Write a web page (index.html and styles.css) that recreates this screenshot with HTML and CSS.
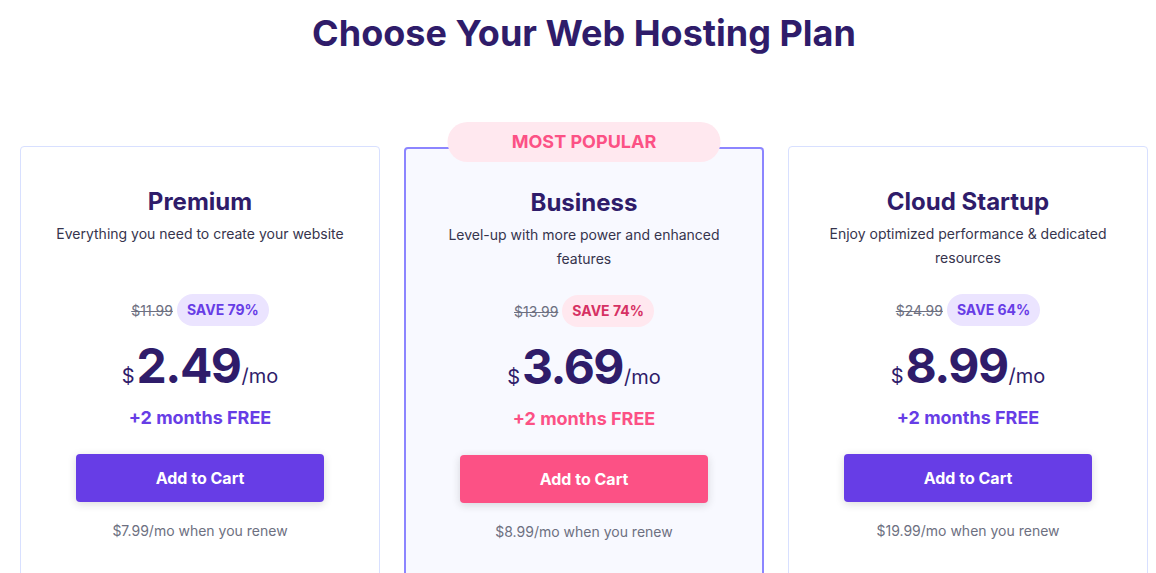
FILE: index.html
```html
<!DOCTYPE html>
<html lang="en">
<head>
    <meta charset="UTF-8">
    <meta name="viewport" content="width=device-width, initial-scale=1.0">
    <title>Choose Your Web Hosting Plan</title>
    <link rel="stylesheet" href="styles.css">
</head>
<body>
    <main class="pricing">
        <h1 class="pricing-title">Choose Your Web Hosting Plan</h1>

        <div class="plans">
            <div class="plan">
                <h2 class="plan-name">Premium</h2>
                <p class="plan-desc">Everything you need to create your website</p>
                <div class="plan-save">
                    <span class="old-price">$11.99</span>
                    <span class="save-pill">SAVE 79%</span>
                </div>
                <div class="plan-price">
                    <span class="currency">$</span><span class="amount">2.49</span><span class="period">/mo</span>
                </div>
                <p class="plan-bonus">+2 months FREE</p>
                <button type="button" class="cart-button">Add to Cart</button>
                <p class="plan-renew">$7.99/mo when you renew</p>
            </div>

            <div class="plan plan-popular">
                <span class="popular-badge">MOST POPULAR</span>
                <h2 class="plan-name">Business</h2>
                <p class="plan-desc">Level-up with more power and enhanced features</p>
                <div class="plan-save">
                    <span class="old-price">$13.99</span>
                    <span class="save-pill">SAVE 74%</span>
                </div>
                <div class="plan-price">
                    <span class="currency">$</span><span class="amount">3.69</span><span class="period">/mo</span>
                </div>
                <p class="plan-bonus">+2 months FREE</p>
                <button type="button" class="cart-button">Add to Cart</button>
                <p class="plan-renew">$8.99/mo when you renew</p>
            </div>

            <div class="plan">
                <h2 class="plan-name">Cloud Startup</h2>
                <p class="plan-desc">Enjoy optimized performance &amp; dedicated resources</p>
                <div class="plan-save">
                    <span class="old-price">$24.99</span>
                    <span class="save-pill">SAVE 64%</span>
                </div>
                <div class="plan-price">
                    <span class="currency">$</span><span class="amount">8.99</span><span class="period">/mo</span>
                </div>
                <p class="plan-bonus">+2 months FREE</p>
                <button type="button" class="cart-button">Add to Cart</button>
                <p class="plan-renew">$19.99/mo when you renew</p>
            </div>
        </div>
    </main>
</body>
</html>
```

FILE: styles.css
```css
body {
    margin: 0;
    background-color: #fff;
    font-family: Inter, "Noto Sans", sans-serif;
    color: #2f1c6a;
    overflow: hidden;
}
.pricing {
    padding: 0 8px 0 20px;
}
.pricing-title {
    margin: 9px 0 0;
    font-size: 36px;
    line-height: 48px;
    font-weight: 700;
    text-align: center;
    color: #2f1c6a;
}
.plans {
    display: grid;
    grid-template-columns: repeat(3, 360px);
    gap: 24px;
    margin-top: 89px;
}
.plan {
    position: relative;
    display: flex;
    flex-direction: column;
    align-items: center;
    height: 460px;
    padding: 39px 24px 0;
    box-sizing: border-box;
    border: 1px solid #d8e0ff;
    border-radius: 4px;
    background-color: #fff;
    text-align: center;
}
.plan-popular {
    margin-top: 1px;
    border: 2px solid #8c85ff;
    padding-top: 38px;
    background-color: #f8f9ff;
}
.popular-badge {
    position: absolute;
    top: -27px;
    left: 50%;
    transform: translateX(-50%);
    width: 273px;
    height: 40px;
    line-height: 40px;
    border-radius: 20px;
    background-color: #ffe8ef;
    color: #fc5185;
    font-size: 18px;
    font-weight: 700;
}
.plan-name {
    margin: 0;
    font-size: 24px;
    line-height: 32px;
    font-weight: 700;
}
.plan-desc {
    margin: 4px 0 0;
    min-height: 48px;
    font-size: 14px;
    line-height: 24px;
    color: #36344d;
}
.plan-save {
    display: flex;
    align-items: center;
    gap: 4px;
    margin-top: 24px;
}
.old-price {
    font-size: 14px;
    color: #6d7081;
    text-decoration: line-through;
}
.save-pill {
    height: 32px;
    line-height: 32px;
    padding: 0 10px;
    border-radius: 16px;
    background-color: #ebe4ff;
    color: #673de6;
    font-size: 14px;
    font-weight: 700;
}
.plan-popular .save-pill {
    background-color: #ffe8ef;
    color: #d63163;
}
.plan-price {
    display: flex;
    align-items: baseline;
    margin-top: 12px;
    line-height: 56px;
}
.currency {
    font-size: 20px;
    margin-right: 2px;
}
.amount {
    font-size: 48px;
    font-weight: 700;
    letter-spacing: -1.5px;
}
.period {
    font-size: 20px;
    margin-left: 1px;
    color: #2f1c6a;
}
.plan-bonus {
    margin: 2px 0 0;
    font-size: 18px;
    line-height: 24px;
    font-weight: 700;
    color: #673de6;
}
.plan-popular .plan-bonus {
    color: #fc5185;
}
.cart-button {
    margin-top: 24px;
    width: 248px;
    height: 48px;
    border: none;
    border-radius: 4px;
    background-color: #673de6;
    color: #fff;
    font-family: inherit;
    font-size: 16px;
    font-weight: 700;
    box-shadow: 0 2px 8px rgba(29, 30, 32, 0.16);
    cursor: pointer;
}
.plan-popular .cart-button {
    background-color: #fc5185;
}
.plan-renew {
    margin: 17px 0 0;
    font-size: 14px;
    line-height: 24px;
    color: #6d7081;
}
```
